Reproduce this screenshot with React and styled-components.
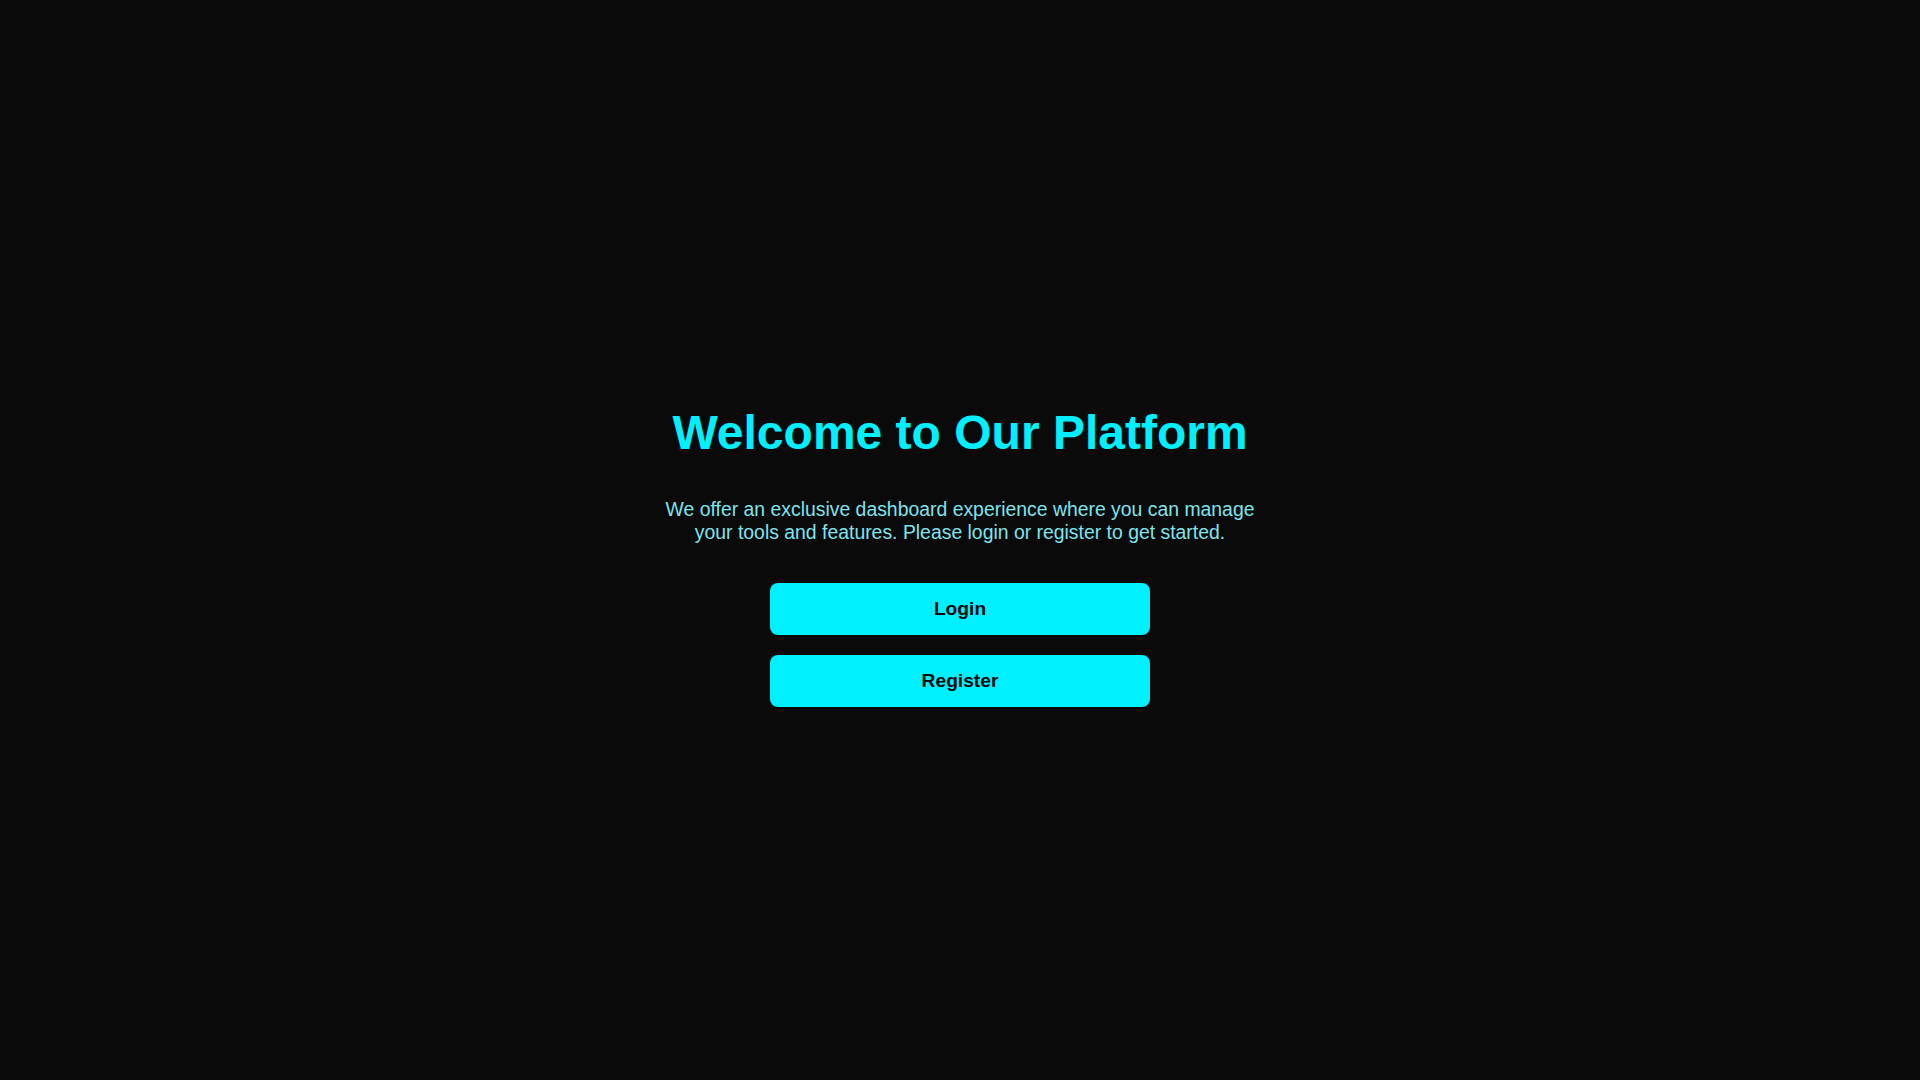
import React from "react";
import styled, { createGlobalStyle } from "styled-components";

const GlobalStyle = createGlobalStyle`
  html, body {
    margin: 0;
    padding: 0;
    background: #0a0a0a;
  }
  body {
    font-family: "Liberation Sans", Arial, sans-serif;
  }
`;

function App() {
  return (
    <Page>
      <GlobalStyle />
      <Title>Welcome to Our Platform</Title>
      <Intro>
        We offer an exclusive dashboard experience where you can manage your
        tools and features. Please login or register to get started.
      </Intro>
      <Actions>
        <ActionButton>Login</ActionButton>
        <ActionButton>Register</ActionButton>
      </Actions>
    </Page>
  );
}

export default App;

const Page = styled.div`
  min-height: 100vh;
  display: flex;
  flex-direction: column;
  align-items: center;
  justify-content: center;
  background: #0a0a0a;
  text-align: center;
`;

const Title = styled.h1`
  margin: 32px 0 38px;
  font-size: 48px;
  font-weight: 700;
  line-height: normal;
  color: #00f0ff;
`;

const Intro = styled.p`
  margin: 0 0 40px;
  max-width: 600px;
  font-size: 19.4px;
  line-height: 22.4px;
  color: #80e3ec;
`;

const Actions = styled.div`
  display: flex;
  flex-direction: column;
  gap: 20px;
`;

const ActionButton = styled.button`
  width: 380px;
  height: 52px;
  border: none;
  border-radius: 8px;
  background: #00f0ff;
  color: #0a0a0a;
  font-family: "Liberation Sans", Arial, sans-serif;
  font-size: 19.2px;
  font-weight: 700;
  cursor: pointer;
`;
